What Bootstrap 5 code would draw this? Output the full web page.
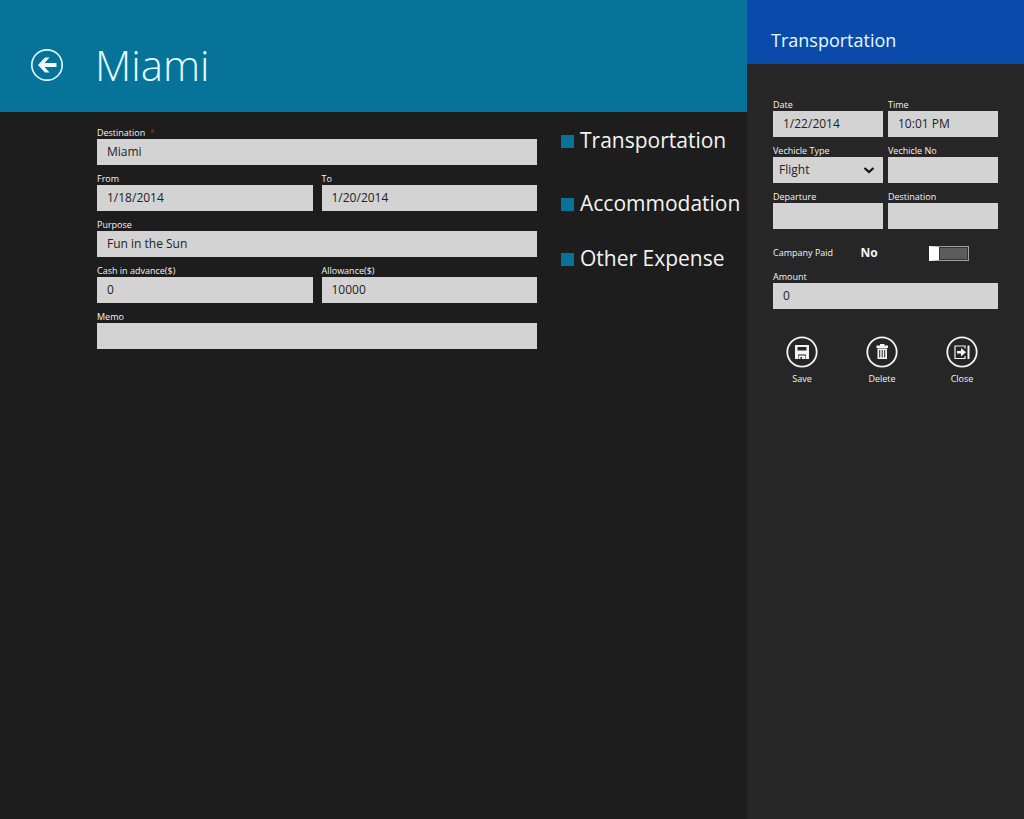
<!DOCTYPE html>
<html lang="en">
<head>
<meta charset="utf-8">
<meta name="viewport" content="width=device-width, initial-scale=1">
<title>Miami</title>
<link href="https://cdn.jsdelivr.net/npm/bootstrap@5.3.0/dist/css/bootstrap.min.css" rel="stylesheet">
<style>
  body { background: #1d1d1d; color: #f4f4f4; font-family: "Open Sans", "Noto Sans", sans-serif; font-size: 9px; }
  .trip-header { background: #087398; height: 112px; padding: 18px 31px 0; }
  .trip-header h1 { font-size: 42px; font-weight: 300; line-height: 60px; color: #e4fbff; }
  .back-btn { width: 32px; height: 32px; margin-right: 32px; }
  .plain-btn { background: none; border: 0; padding: 0; color: inherit; }
  .trip-body { padding: 14px 0 14px 97px; gap: 24px; }
  .trip-fields { --bs-gutter-x: 9px; }
  .field { padding-bottom: 7px; }
  .field label { display: block; font-size: 9px; line-height: 13px; color: #f4f4f4; }
  .field .form-control, .field .form-select {
    height: 26px; border: 0; border-radius: 0; padding: 0 10px;
    background-color: #d3d3d3; color: #222; font-size: 12px; line-height: 26px;
  }
  .field .form-select {
    padding: 0 26px 0 6px;
    background-image: url("data:image/svg+xml,%3Csvg xmlns='http://www.w3.org/2000/svg' viewBox='0 0 12 12'%3E%3Cpath d='M1.5 4l4.5 4 4.5-4' fill='none' stroke='%23111' stroke-width='2.2'/%3E%3C/svg%3E");
    background-size: 12px 12px; background-position: right 8px center;
  }
  .required { color: #a8282d; margin-left: 2px; }
  .expense-nav { width: 186px; }
  .expense-nav a { color: #f4f4f4; font-size: 21px; line-height: 28px; gap: 6px; }
  .expense-nav a::before { content: ""; width: 13px; height: 13px; background: #087398; flex: none; margin-top: 3px; }
  .expense-nav li + li { margin-top: 35px; }
  .expense-nav li:last-child { margin-top: 27px; }
  .panel { width: 277px; background: #262626; }
  .panel-header { background: #0a4aab; height: 64px; padding: 16px 24px 0; }
  .panel-header h2 { font-size: 18px; line-height: 48px; color: #e4fbff; }
  .panel-body { padding: 34px 26px 0; }
  .panel-fields { --bs-gutter-x: 5px; }
  .paid-row { height: 34px; padding-right: 29px; }
  .paid-row output { font-size: 12px; font-weight: 700; }
  .toggle {
    appearance: none; width: 40px; height: 15px; margin: 0; border: 1px solid #a0a0a0;
    border-left: 10px solid #fff; background: #5c5c5c; box-shadow: inset 0 0 0 1px #333;
  }
  .toggle:checked { border-left: 1px solid #a0a0a0; border-right: 10px solid #fff; background: #087398; }
  .actions { padding: 20px 22px 0 15px; }
  .actions button { line-height: 13px; gap: 4px; }
  .actions svg { width: 32px; height: 32px; }
</style>
</head>
<body>
<div class="d-flex min-vh-100">
  <main class="flex-grow-1">
    <header class="trip-header d-flex align-items-center">
      <button class="plain-btn back-btn" type="button" aria-label="Back">
        <svg class="d-block" viewBox="0 0 32 32" width="32" height="32">
          <circle cx="16" cy="16" r="15.2" fill="none" stroke="#dcf8ff" stroke-width="1.7"/>
          <path d="M7 16l7-7.500h4.500l-5 5.500h12v4h-12l5 5.500H14z" fill="#f2fdff"/>
        </svg>
      </button>
      <h1 class="mb-0">Miami</h1>
    </header>
    <div class="trip-body d-flex">
      <form class="flex-grow-1">
        <div class="row trip-fields">
          <div class="col-12 field"><label for="dest">Destination <span class="required">*</span></label><input class="form-control" id="dest" value="Miami"></div>
          <div class="col-6 field"><label for="from">From</label><input class="form-control" id="from" value="1/18/2014"></div>
          <div class="col-6 field"><label for="to">To</label><input class="form-control" id="to" value="1/20/2014"></div>
          <div class="col-12 field"><label for="purpose">Purpose</label><input class="form-control" id="purpose" value="Fun in the Sun"></div>
          <div class="col-6 field"><label for="cash">Cash in advance($)</label><input class="form-control" id="cash" value="0"></div>
          <div class="col-6 field"><label for="allow">Allowance($)</label><input class="form-control" id="allow" value="10000"></div>
          <div class="col-12 field"><label for="memo">Memo</label><input class="form-control" id="memo"></div>
        </div>
      </form>
      <nav class="expense-nav flex-shrink-0">
        <ul class="list-unstyled mb-0">
          <li><a class="d-flex align-items-center text-decoration-none" href="#transportation">Transportation</a></li>
          <li><a class="d-flex align-items-center text-decoration-none" href="#accommodation">Accommodation</a></li>
          <li><a class="d-flex align-items-center text-decoration-none" href="#other">Other Expense</a></li>
        </ul>
      </nav>
    </div>
  </main>
  <aside class="panel flex-shrink-0">
    <header class="panel-header"><h2 class="fw-normal mb-0">Transportation</h2></header>
    <form>
      <div class="panel-body">
        <div class="row panel-fields">
          <div class="col-6 field"><label for="date">Date</label><input class="form-control" id="date" value="1/22/2014"></div>
          <div class="col-6 field"><label for="time">Time</label><input class="form-control" id="time" value="10:01 PM"></div>
          <div class="col-6 field"><label for="vtype">Vechicle Type</label><select class="form-select" id="vtype"><option>Flight</option></select></div>
          <div class="col-6 field"><label for="vno">Vechicle No</label><input class="form-control" id="vno"></div>
          <div class="col-6 field"><label for="departure">Departure</label><input class="form-control" id="departure"></div>
          <div class="col-6 field"><label for="pdest">Destination</label><input class="form-control" id="pdest"></div>
        </div>
        <div class="paid-row d-flex align-items-center justify-content-between">
          <label for="paid">Campany Paid</label>
          <output for="paid">No</output>
          <input class="toggle ms-4" type="checkbox" role="switch" id="paid">
        </div>
        <div class="field"><label for="amount">Amount</label><input class="form-control" id="amount" value="0"></div>
      </div>
      <div class="actions d-flex">
        <button class="plain-btn d-flex flex-column align-items-center flex-fill w-100" type="button">
          <svg viewBox="0 0 32 32"><circle cx="16" cy="16" r="14.700" fill="none" stroke="#f4f4f4" stroke-width="1.800"/>
            <path fill="#f4f4f4" fill-rule="evenodd" d="M9 9h14v14h-3v-4.500h-8V23H9zM11.500 11v3.500h9V11zM12.500 19.500h7V23h-3.500v-2h-1.500v2h-2z"/></svg>
          Save
        </button>
        <button class="plain-btn d-flex flex-column align-items-center flex-fill w-100" type="button">
          <svg viewBox="0 0 32 32"><circle cx="16" cy="16" r="14.700" fill="none" stroke="#f4f4f4" stroke-width="1.800"/>
            <path fill="#f4f4f4" fill-rule="evenodd" d="M14 8h4.500v1.500H22V12H10.500V9.500H14zM11.500 12.500H21V23H11.500zM13.200 14v7.500h1V14zM15.700 14v7.500h1V14zM18.200 14v7.500h1V14z"/></svg>
          Delete
        </button>
        <button class="plain-btn d-flex flex-column align-items-center flex-fill w-100" type="button">
          <svg viewBox="0 0 32 32"><circle cx="16" cy="16" r="14.700" fill="none" stroke="#f4f4f4" stroke-width="1.800"/>
            <path fill="none" stroke="#f4f4f4" stroke-width="1.200" d="M19 12.500V10H9v12.500h10V20"/>
            <path fill="#f4f4f4" d="M21.500 9.500h2v13.500h-2zM11 15h4v-3l5 4.200-5 4.200V17.500h-4z"/></svg>
          Close
        </button>
      </div>
    </form>
  </aside>
</div>
<script src="https://cdn.jsdelivr.net/npm/bootstrap@5.3.0/dist/js/bootstrap.bundle.min.js"></script>
</body>
</html>
